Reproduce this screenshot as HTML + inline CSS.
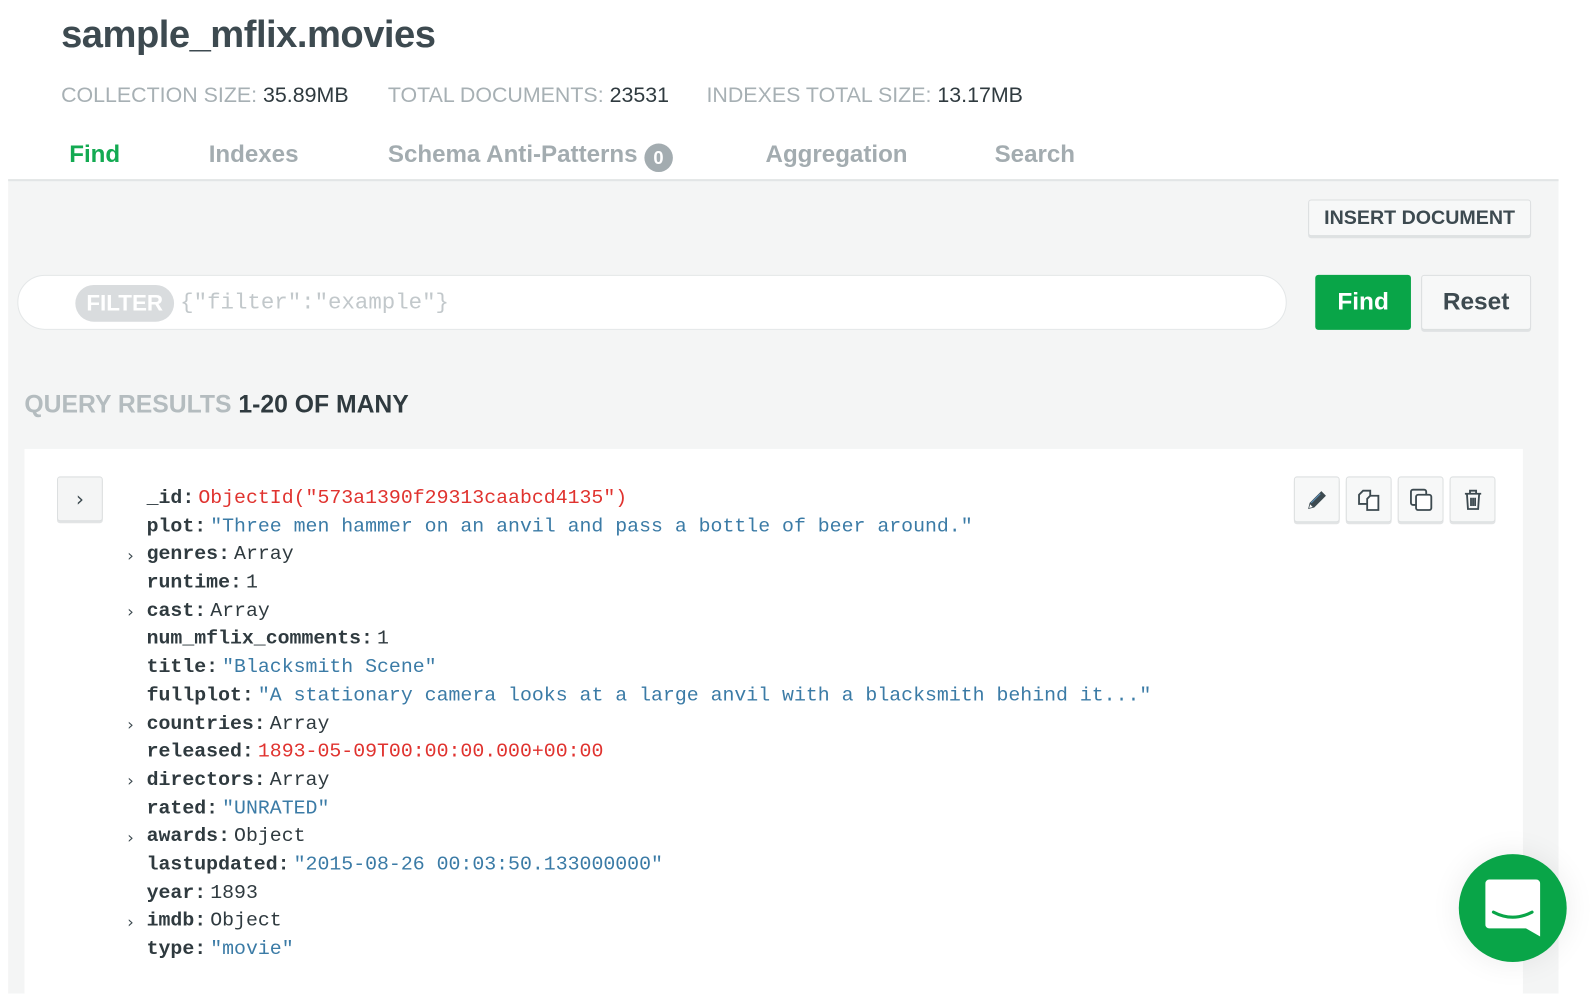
<!DOCTYPE html>
<html><head><meta charset="utf-8"><style>
*{margin:0;padding:0;box-sizing:border-box}
body{width:1596px;height:971px;overflow:hidden;background:#fff;font-family:"Liberation Sans",Arial,sans-serif;position:relative}
#w{position:absolute;left:0;top:0;width:1568px;height:960px;transform:scale(1.018);transform-origin:0 0}
.a{position:absolute;white-space:nowrap}
.t{font-size:37.5px;font-weight:bold;color:#3d4a50;letter-spacing:-0.5px}
.st{font-size:21px;color:#a7b0b4;top:82px}
.st b{font-weight:normal;color:#2f3a3f}
.tab{font-size:23.7px;font-weight:bold;color:#a3acb0;top:139px}
.panel{position:absolute;left:8px;top:176px;width:1523px;height:800px;background:#f4f5f5;border-top:2px solid #e2e5e6}
.btn{position:absolute;border:1px solid #dcdfe0;border-radius:3px;background:#f7f8f8;box-shadow:0 2px 0 #dfe2e3;font-weight:bold;color:#3d4a50;text-align:center}
.card{position:absolute;left:24px;top:441px;width:1472px;height:540px;background:#fff}
.mono{font-family:"Liberation Mono",monospace;font-size:19.5px}
.ln{position:absolute;left:144px;font-family:"Liberation Mono",monospace;font-size:19.5px;color:#2f3a3f;white-space:nowrap}
.ln b{font-weight:bold;margin-right:4px}
.s{color:#3b7ba6}.r{color:#e0332f}
.car{position:absolute;left:125px;font-size:16px;color:#3d4a50;font-family:"DejaVu Sans",sans-serif}
.ib{position:absolute;top:468px;width:45px;height:45px;border:1px solid #dcdfe0;border-radius:3px;background:#f7f8f8;box-shadow:0 2px 0 #e2e4e5}
.ib svg{position:absolute;left:10px;top:10px}
</style></head><body><div id="w">
<div class="a t" style="left:60px;top:12px">sample_mflix.movies</div>
<div class="a st" style="left:60px">COLLECTION SIZE: <b>35.89MB</b></div>
<div class="a st" style="left:381px">TOTAL DOCUMENTS: <b>23531</b></div>
<div class="a st" style="left:694px">INDEXES TOTAL SIZE: <b>13.17MB</b></div>
<div class="a tab" style="left:68px;color:#13aa52">Find</div>
<div class="a tab" style="left:205px">Indexes</div>
<div class="a tab" style="left:381px">Schema Anti-Patterns <span style="display:inline-block;width:28px;height:28px;border-radius:50%;background:#a3acb0;color:#fff;font-size:18px;text-align:center;line-height:28px;vertical-align:-2px">0</span></div>
<div class="a tab" style="left:752px">Aggregation</div>
<div class="a tab" style="left:977px">Search</div>
<div class="panel"></div>
<div class="btn" style="left:1285px;top:196px;width:219px;height:36px;font-size:19.3px;line-height:36px">INSERT DOCUMENT</div>
<div class="a" style="left:17px;top:270px;width:1247px;height:54px;border:1px solid #e4e7e8;border-radius:27px;background:#fff"></div>
<div class="a" style="left:74px;top:280px;width:97px;height:36px;border-radius:18px;background:#d9dcde;color:#fff;font-weight:bold;font-size:22px;line-height:36px;text-align:center">FILTER</div>
<div class="a mono" style="left:177px;top:285px;font-size:22px;color:#c2c8cb">{"filter":"example"}</div>
<div class="a" style="left:1292px;top:270px;width:94px;height:54px;border-radius:3px;background:#09a548;color:#fff;font-weight:bold;font-size:24px;line-height:54px;text-align:center">Find</div>
<div class="btn" style="left:1396px;top:270px;width:108px;height:54px;font-size:24px;line-height:52px">Reset</div>
<div class="a" style="left:24px;top:384px;font-size:24.3px;font-weight:bold;color:#b4bcbf">QUERY RESULTS <span style="color:#2f3a3f">1-20 OF MANY</span></div>
<div class="card"></div>
<div class="a" style="left:56px;top:468px;width:45px;height:44px;border:1px solid #dcdfe0;border-radius:3px;background:#f4f5f5;box-shadow:0 2px 0 #e2e4e5;text-align:center;line-height:42px;font-size:20px;color:#3d4a50;font-family:'DejaVu Sans',sans-serif">›</div>
<div class="ln" style="top:478px"><b>_id:</b><span class="r">ObjectId("573a1390f29313caabcd4135")</span></div>
<div class="ln" style="top:506px"><b>plot:</b><span class="s">"Three men hammer on an anvil and pass a bottle of beer around."</span></div>
<div class="car" style="top:536px">›</div><div class="ln" style="top:533px"><b>genres:</b>Array</div>
<div class="ln" style="top:561px"><b>runtime:</b>1</div>
<div class="car" style="top:591px">›</div><div class="ln" style="top:589px"><b>cast:</b>Array</div>
<div class="ln" style="top:616px"><b>num_mflix_comments:</b>1</div>
<div class="ln" style="top:644px"><b>title:</b><span class="s">"Blacksmith Scene"</span></div>
<div class="ln" style="top:672px"><b>fullplot:</b><span class="s">"A stationary camera looks at a large anvil with a blacksmith behind it..."</span></div>
<div class="car" style="top:702px">›</div><div class="ln" style="top:700px"><b>countries:</b>Array</div>
<div class="ln" style="top:727px"><b>released:</b><span class="r">1893-05-09T00:00:00.000+00:00</span></div>
<div class="car" style="top:757px">›</div><div class="ln" style="top:755px"><b>directors:</b>Array</div>
<div class="ln" style="top:783px"><b>rated:</b><span class="s">"UNRATED"</span></div>
<div class="car" style="top:813px">›</div><div class="ln" style="top:810px"><b>awards:</b>Object</div>
<div class="ln" style="top:838px"><b>lastupdated:</b><span class="s">"2015-08-26 00:03:50.133000000"</span></div>
<div class="ln" style="top:866px"><b>year:</b>1893</div>
<div class="car" style="top:896px">›</div><div class="ln" style="top:893px"><b>imdb:</b>Object</div>
<div class="ln" style="top:921px"><b>type:</b><span class="s">"movie"</span></div>
<div class="ib" style="left:1271px"><svg width="24" height="24" viewBox="0 0 24 24"><path d="M3 21l1.5-6L16 3.5l4.5 4.5L9 19.5z" fill="#3d4a50"/><path d="M4 20l1-3.5 2.5 2.5z" fill="#fff"/><path d="M6 15l9-9" stroke="#5a8fb8" stroke-width="1"/></svg></div>
<div class="ib" style="left:1322px"><svg width="24" height="24" viewBox="0 0 24 24" fill="none" stroke="#3d4a50" stroke-width="1.8"><path d="M2 7l4-4h7v13H2z"/><path d="M10 11l3-3h8v14H10z" fill="#fff"/></svg></div>
<div class="ib" style="left:1373px"><svg width="24" height="24" viewBox="0 0 24 24" fill="none" stroke="#3d4a50" stroke-width="1.8"><rect x="2" y="2" width="15" height="15" rx="2"/><rect x="7" y="7" width="15" height="15" rx="2" fill="#fff"/></svg></div>
<div class="ib" style="left:1424px"><svg width="24" height="24" viewBox="0 0 24 24" fill="none" stroke="#3d4a50" stroke-width="1.8"><path d="M4 6h16M9 6V3h6v3M6 6l1 15h10l1-15M10 10v8M12 10v8M14 10v8"/></svg></div>
<div class="a" style="left:1433px;top:839px;width:106px;height:106px;border-radius:50%;background:#09a548;box-shadow:0 0 30px rgba(0,0,0,.08)"></div>
<svg class="a" style="left:1459px;top:864px" width="54" height="56" viewBox="0 0 54 56"><path d="M4 0h46a4 4 0 0 1 4 4v52l-14-8H4a4 4 0 0 1-4-4V4a4 4 0 0 1 4-4z" fill="#fff"/><path d="M8 32q19 10 38 0" stroke="#09a548" stroke-width="3" fill="none" stroke-linecap="round"/></svg>
</div></body></html>
